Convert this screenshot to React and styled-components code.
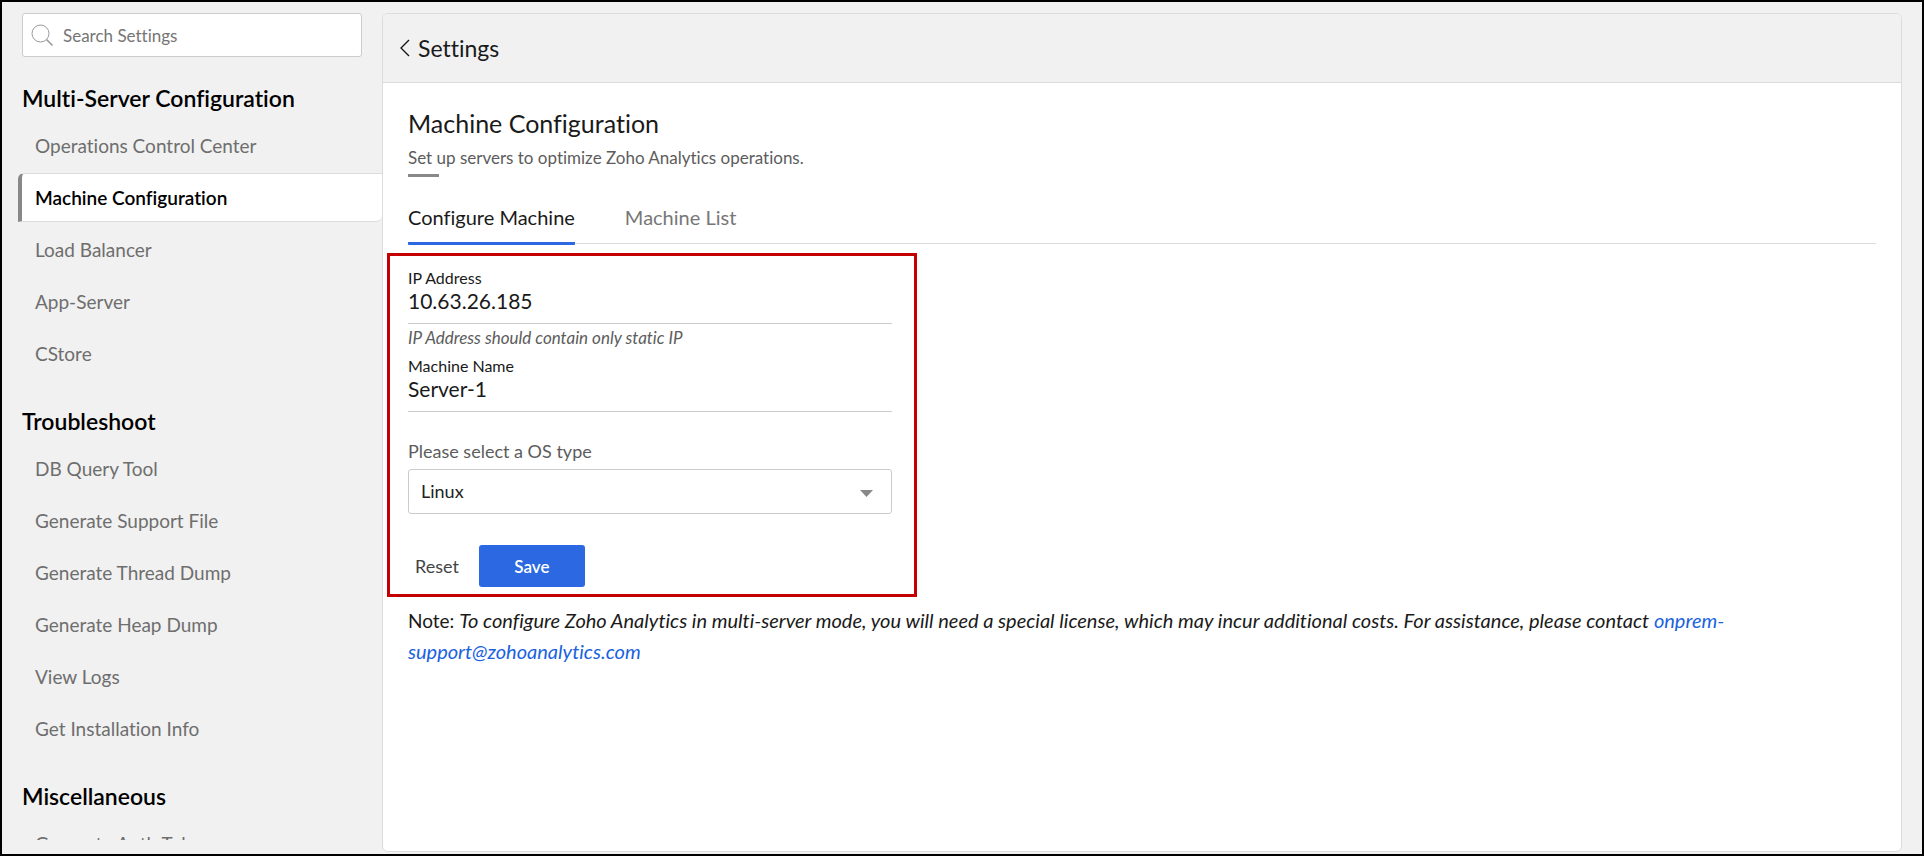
import React, { useState } from "react";
import styled, { createGlobalStyle } from "styled-components";

const GlobalStyle = createGlobalStyle`
  * {
    box-sizing: border-box;
  }

  body {
    margin: 0;
    font-family: Lato, "Liberation Sans", sans-serif;
    font-variant-ligatures: none;
    color: #1a1a1a;
  }

  input,
  select,
  button {
    font-family: inherit;
    font-variant-ligatures: none;
  }
`;

const sections = [
  {
    title: "Multi-Server Configuration",
    items: ["Operations Control Center", "Machine Configuration", "Load Balancer", "App-Server", "CStore"],
  },
  {
    title: "Troubleshoot",
    items: [
      "DB Query Tool",
      "Generate Support File",
      "Generate Thread Dump",
      "Generate Heap Dump",
      "View Logs",
      "Get Installation Info",
    ],
  },
  {
    title: "Miscellaneous",
    items: ["Generate Auth Token"],
  },
];

const tabs = ["Configure Machine", "Machine List"];

const Page = styled.div`
  display: flex;
  height: 100vh;
  padding: 11px 20px 0 0;
  background: #f1f1f1;
  border: 2px solid #000;
`;

const Sidebar = styled.aside`
  flex: 0 0 380px;
  padding-left: 16px;
  margin-bottom: 14px;
  overflow: hidden;
`;

const SearchBox = styled.label`
  display: flex;
  align-items: center;
  gap: 9px;
  height: 44px;
  margin: 0 20px 0 4px;
  padding: 0 8px;
  background: #fff;
  border: 1px solid #ccc;
  border-radius: 3px;
`;

const SearchInput = styled.input`
  flex: 1;
  min-width: 0;
  padding: 0;
  border: 0;
  outline: 0;
  background: none;
  font-size: 17px;

  &::placeholder {
    color: #757575;
    opacity: 1;
  }
`;

const Section = styled.section`
  margin-bottom: 2px;
`;

const SectionTitle = styled.h2`
  margin: 0 0 0 4px;
  padding-top: 25px;
  font-size: 23px;
  line-height: 32px;
  font-weight: 600;
  color: #000;
`;

const NavList = styled.ul`
  display: flex;
  flex-direction: column;
  gap: 3px;
  margin: 7px 0 0;
  padding: 0;
  list-style: none;
`;

const NavLink = styled.a`
  display: block;
  padding: 0 13px;
  border: 1px solid ${(props) => (props.$active ? "#dcdcdc" : "transparent")};
  border-left: 4px solid ${(props) => (props.$active ? "#888" : "transparent")};
  border-right: 0;
  border-radius: 6px 0 6px 0;
  background: ${(props) => (props.$active ? "#fff" : "none")};
  color: ${(props) => (props.$active ? "#000" : "#6e6e6e")};
  font-size: 19px;
  font-weight: ${(props) => (props.$active ? 600 : 400)};
  line-height: 47px;
  text-decoration: none;
`;

const Panel = styled.main`
  flex: 1;
  min-width: 0;
  margin-bottom: 2px;
  background: #fff;
  border: 1px solid #dcdcdc;
  border-radius: 6px;
  overflow: hidden;
`;

const PanelHeader = styled.header`
  display: flex;
  align-items: center;
  height: 69px;
  padding-left: 16px;
  background: #f1f1f1;
  border-bottom: 1px solid #dcdcdc;
`;

const BackButton = styled.button`
  display: flex;
  align-items: center;
  gap: 8px;
  padding: 0;
  border: 0;
  background: none;
  color: #1a1a1a;
  font-size: 23px;
  line-height: 28px;
  cursor: pointer;
`;

const Content = styled.div`
  padding: 24px 25px 0;
`;

const Title = styled.h1`
  margin: 0;
  font-size: 25px;
  line-height: 32px;
  font-weight: 400;
`;

const Subtitle = styled.p`
  margin: 7px 0 0;
  font-size: 17px;
  line-height: 24px;
  color: #5c5c5c;

  &::after {
    content: "";
    display: block;
    width: 31px;
    height: 3px;
    margin-top: 4px;
    background: #888;
  }
`;

const TabBar = styled.div`
  display: flex;
  gap: 50px;
  margin-top: 26px;
  border-bottom: 1px solid #dcdcdc;
`;

const Tab = styled.button`
  padding: 0 0 11px;
  margin-bottom: -2px;
  border: 0;
  border-bottom: 3px solid ${(props) => (props.$active ? "#2b68e2" : "transparent")};
  border-radius: 1px;
  background: none;
  color: ${(props) => (props.$active ? "#1a1a1a" : "#777")};
  font-size: 20px;
  line-height: 28px;
  cursor: pointer;
`;

const Form = styled.form`
  width: 530px;
  max-width: 100%;
  margin: 9px 0 0 -21px;
  padding: 12px 22px 7px 18px;
  border: 3px solid #c40000;
`;

const Field = styled.div`
  display: flex;
  flex-direction: column;
`;

const FieldLabel = styled.label`
  font-size: 16px;
  line-height: 20px;
`;

const FieldInput = styled.input`
  height: 36px;
  padding: 0 0 11px;
  border: 0;
  border-bottom: 1px solid #ccc;
  outline: 0;
  color: #1a1a1a;
  font-size: 21px;
  line-height: 24px;
`;

const Hint = styled.small`
  padding: 2px 0 6px;
  font-size: 17px;
  line-height: 24px;
  font-style: italic;
  color: #5c5c5c;
`;

const SelectLabel = styled.label`
  margin: 27px 0 6px;
  font-size: 18px;
  line-height: 24px;
  color: #5c5c5c;
`;

const SelectBox = styled.div`
  display: grid;
  align-items: center;

  > * {
    grid-area: 1 / 1;
  }

  svg {
    justify-self: end;
    margin: 3px 19px 0 0;
    pointer-events: none;
  }
`;

const Select = styled.select`
  width: 100%;
  height: 45px;
  padding: 0 12px 2px;
  appearance: none;
  border: 1px solid #ccc;
  border-radius: 3px;
  background: #fff;
  color: #222;
  font-size: 18px;
`;

const Actions = styled.div`
  display: flex;
  align-items: center;
  gap: 20px;
  margin-top: 31px;
  padding-left: 7px;
`;

const ResetButton = styled.button`
  padding: 0;
  border: 0;
  background: none;
  color: #444;
  font-size: 18px;
  line-height: 24px;
  cursor: pointer;
`;

const SaveButton = styled.button`
  width: 106px;
  height: 42px;
  border: 0;
  border-radius: 3px;
  background: #2b68e2;
  color: #fff;
  font-size: 17px;
  font-weight: 600;
  cursor: pointer;
`;

const Note = styled.p`
  margin: 8px 0 0;
  font-size: 19px;
  line-height: 30px;

  em {
    font-size: 20px;
  }

  a {
    color: #1a62e0;
    text-decoration: none;
  }
`;

const SearchIcon = () => (
  <svg width="23" height="23" viewBox="0 0 23 23" fill="none" stroke="#999" aria-hidden="true">
    <circle cx="9.5" cy="9.5" r="8.5" />
    <path d="M15.5 15.5l6 6" strokeWidth="1.6" />
  </svg>
);

const BackIcon = () => (
  <svg width="11" height="18" viewBox="0 0 11 18" fill="none" stroke="#111" strokeWidth="1.3" aria-hidden="true">
    <path d="M10 1L2 9l8 8" />
  </svg>
);

const ArrowIcon = () => (
  <svg width="13" height="7" viewBox="0 0 13 7" fill="#888" aria-hidden="true">
    <path d="M0 0h13L6.500 7z" />
  </svg>
);

const SettingsNav = () => {
  const [active, setActive] = useState("Machine Configuration");

  return (
    <nav>
      {sections.map((section) => (
        <Section key={section.title}>
          <SectionTitle>{section.title}</SectionTitle>
          <NavList>
            {section.items.map((item) => (
              <li key={item}>
                <NavLink href="#" $active={item === active} onClick={() => setActive(item)}>
                  {item}
                </NavLink>
              </li>
            ))}
          </NavList>
        </Section>
      ))}
    </nav>
  );
};

const MachineForm = () => {
  const [ip, setIp] = useState("10.63.26.185");
  const [name, setName] = useState("Server-1");

  return (
    <Form onSubmit={(e) => e.preventDefault()}>
      <Field>
        <FieldLabel htmlFor="ip">IP Address</FieldLabel>
        <FieldInput id="ip" value={ip} onChange={(e) => setIp(e.target.value)} />
        <Hint>IP Address should contain only static IP</Hint>
      </Field>
      <Field>
        <FieldLabel htmlFor="name">Machine Name</FieldLabel>
        <FieldInput id="name" value={name} onChange={(e) => setName(e.target.value)} />
      </Field>
      <Field>
        <SelectLabel htmlFor="os">Please select a OS type</SelectLabel>
        <SelectBox>
          <Select id="os" defaultValue="Linux">
            <option>Linux</option>
            <option>Windows</option>
          </Select>
          <ArrowIcon />
        </SelectBox>
      </Field>
      <Actions>
        <ResetButton type="reset">Reset</ResetButton>
        <SaveButton type="submit">Save</SaveButton>
      </Actions>
    </Form>
  );
};

const App = () => {
  const [tab, setTab] = useState(tabs[0]);

  return (
    <>
      <GlobalStyle />
      <Page>
        <Sidebar>
          <SearchBox>
            <SearchIcon />
            <SearchInput type="text" placeholder="Search Settings" aria-label="Search Settings" />
          </SearchBox>
          <SettingsNav />
        </Sidebar>
        <Panel>
          <PanelHeader>
            <BackButton>
              <BackIcon />
              Settings
            </BackButton>
          </PanelHeader>
          <Content>
            <Title>Machine Configuration</Title>
            <Subtitle>Set up servers to optimize Zoho Analytics operations.</Subtitle>
            <TabBar role="tablist">
              {tabs.map((t) => (
                <Tab key={t} role="tab" aria-selected={t === tab} $active={t === tab} onClick={() => setTab(t)}>
                  {t}
                </Tab>
              ))}
            </TabBar>
            <MachineForm />
            <Note>
              Note:{" "}
              <em>
                To configure Zoho Analytics in multi-server mode, you will need a special license, which may incur
                additional costs. For assistance, please contact{" "}
                <a href="mailto:onprem-support@zohoanalytics.com">onprem-support@zohoanalytics.com</a>
              </em>
            </Note>
          </Content>
        </Panel>
      </Page>
    </>
  );
};

export default App;
